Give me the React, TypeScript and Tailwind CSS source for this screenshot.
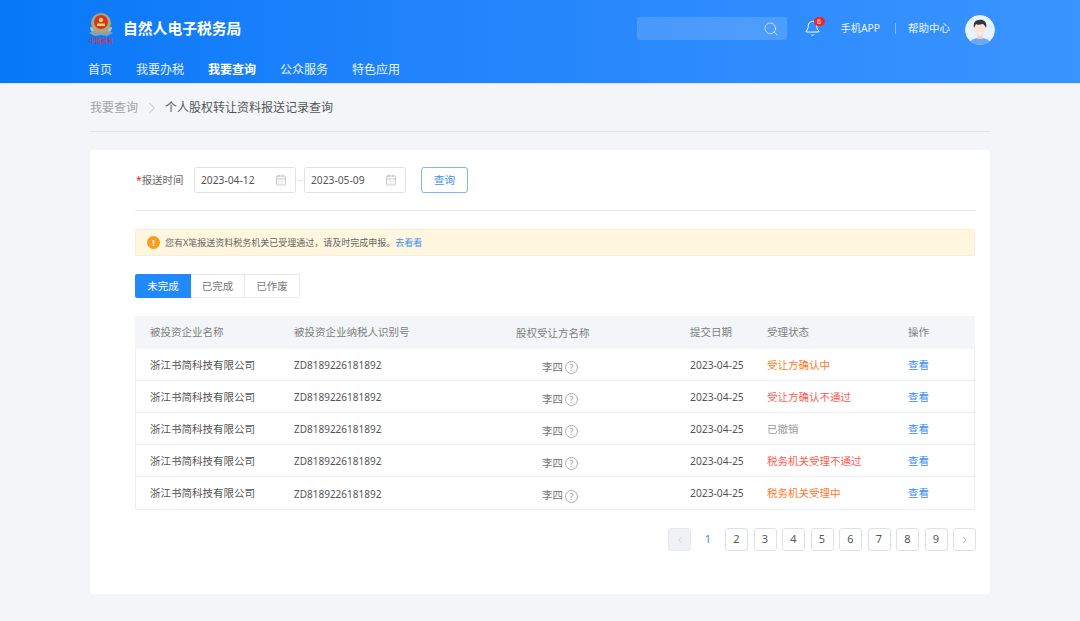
import { Search, Bell, CalendarDays, ChevronRight, ChevronLeft } from "lucide-react";

const rows = [
  { s: "受让方确认中", c: "text-[#ff7a1f]" },
  { s: "受让方确认不通过", c: "text-[#ff5a50]" },
  { s: "已撤销", c: "text-[#9a9a9a]" },
  { s: "税务机关受理不通过", c: "text-[#ff5a50]" },
  { s: "税务机关受理中", c: "text-[#ff7a1f]" },
];
const cols = "grid grid-cols-[144px_222px_174px_77px_141px_1fr] pl-[15px]";

function Emblem() {
  return (
    <div className="flex w-[26px] flex-col items-center">
      <svg width="24" height="25" viewBox="0 0 24 25">
        <path d="M1 15c0 5 5 8 11 8s11-3 11-8l-3 .5c-1 3.500-4 5-8 5s-7-1.500-8-5z" fill="#b9c3c9" />
        <path d="M0 21l6-3 6 3 6-3 6 3-6 3-6-1-6 1z" fill="#8fa0aa" />
        <circle cx="12" cy="11" r="10" fill="#a9a678" />
        <circle cx="12" cy="10" r="7" fill="#d9322a" />
        <circle cx="12" cy="8" r="2.200" fill="#f3d25a" />
        <rect x="8" y="11.500" width="8" height="2.500" fill="#f3d25a" />
      </svg>
      <span className="mt-[1px] whitespace-nowrap text-[6px] leading-[7px] text-[#e0262b]">中国税务</span>
    </div>
  );
}

function Avatar() {
  return (
    <svg width="30" height="30" viewBox="0 0 30 30" className="rounded-full">
      <circle cx="15" cy="15" r="15" fill="#e6f2ff" />
      <path d="M4 30c1-6 6-7 11-7s10 1 11 7z" fill="#6ea8f5" />
      <rect x="12.500" y="18" width="5" height="6" fill="#f3d2c4" />
      <ellipse cx="15" cy="14" rx="5.600" ry="7" fill="#fbe3d8" />
      <path d="M9 13c-1-5 1-8 5-8 3-1 7 1 7 4 1 1 0 3 0 4-1-2-2-4-4-4-2 1-5 1-6 0-1 1-1 3-2 4z" fill="#33363d" />
      <path d="M13 17.500h4c-.5 1.400-3.500 1.400-4 0z" fill="#fff" />
    </svg>
  );
}

function DateBox({ v }: { v: string }) {
  return (
    <div className="flex h-[26px] w-[102px] items-center justify-between rounded-[3px] border border-[#dfe1e6] bg-white pl-[6px] pr-[7px]">
      <span className="pt-[2px] text-[10.250px] text-[#555]">{v}</span>
      <CalendarDays size={12} strokeWidth={1.2} className="-translate-x-px text-[#a8a8a8]" />
    </div>
  );
}

export default function App() {
  return (
    <div className="h-[621px] w-[1080px] overflow-hidden bg-[#f4f5f9] font-['Noto_Sans','Noto_Sans_CJK_SC',sans-serif]">
      <header className="h-[84px] border-b border-[#d6e6fb] bg-gradient-to-r from-[#0578f8] to-[#3a94ff] pl-[88px] pr-[85px]">
        <div className="flex h-[60px] items-center justify-between">
          <div className="mb-[4px] flex items-center gap-[9px]">
            <Emblem />
            <span className="text-[14.800px] font-bold text-white">自然人电子税务局</span>
          </div>
          <div className="flex items-center">
            <div className="mb-[3px] flex items-center">
              <div className="flex h-[23px] w-[150px] items-center justify-end rounded-[2px] bg-white/15 pr-[8px]">
                <Search size={16} strokeWidth={1.2} className="text-white/80" />
              </div>
              <div className="relative ml-[17px] mr-[20px]">
                <Bell size={17} strokeWidth={1.4} className="text-white" />
                <span className="absolute -right-[4px] -top-[3px] flex h-[9px] w-[11px] items-center justify-center rounded-full bg-[#f5222d] text-[7px] leading-none text-white">6</span>
              </div>
              <span className="text-[10.250px] text-white/90">手机APP</span>
              <span className="ml-[15px] mr-[12px] h-[11px] w-px bg-white/40" />
              <span className="mr-[15px] text-[10.500px] text-white/90">帮助中心</span>
            </div>
            <Avatar />
          </div>
        </div>
        <nav className="flex h-[19px] items-center gap-[24px] text-[12px] text-white/90">
          <span>首页</span>
          <span>我要办税</span>
          <span className="font-bold text-white">我要查询</span>
          <span>公众服务</span>
          <span>特色应用</span>
        </nav>
      </header>

      <div className="px-[90px]">
        <div className="flex h-[48px] items-center border-b border-[#e1e3e8] pt-px text-[12px]">
          <span className="text-[#a3a3a3]">我要查询</span>
          <ChevronRight size={18} strokeWidth={1} className="ml-[5px] mr-[4px] text-[#a3a3a3]" />
          <span className="text-[#555]">个人股权转让资料报送记录查询</span>
        </div>

        <main className="mt-[18px] h-[444px] bg-white pl-[45px] pr-[15px] pt-[17px]">
          <div className="flex h-[44px] items-start border-b border-[#e6e7eb]">
            <div className="flex items-center">
              <span className="mr-[12px] w-[47px] whitespace-nowrap text-left pl-px text-[10.400px] leading-[26px] text-[#666]"><span className="text-[#f5222d]">*</span>报送时间</span>
              <DateBox v="2023-04-12" />
              <span className="mx-[1.500px] h-px w-[5px] bg-[#dfe1e6]" />
              <DateBox v="2023-05-09" />
              <button className="ml-[15px] h-[26px] w-[47px] rounded-[3px] border border-[#7db6fb] bg-white pt-[2px] text-[10.500px] text-[#3b8ff5]">查询</button>
            </div>
          </div>

          <div className="mt-[18px] flex h-[27px] items-center rounded-[2px] border border-[#fbeed0] bg-[#fff6e0] pl-[11px]">
            <span className="mr-[5px] flex h-[13px] w-[13px] items-center justify-center rounded-full bg-[#fa9d1c] text-[9px] font-bold leading-none text-white">!</span>
            <span className="text-[9px] text-[#666]">您有X笔报送资料税务机关已受理通过，请及时完成申报。<span className="text-[#3b8ff5]">去看看</span></span>
          </div>

          <div className="mt-[18px] flex h-[24px] w-[165px] text-[10.500px] text-[#777]">
            <span className="flex w-[56px] items-center justify-center rounded-l-[2px] bg-[#2089fb] pt-px text-white">未完成</span>
            <span className="flex w-[54px] items-center justify-center border-y border-r border-[#e8e9ed] pt-px">已完成</span>
            <span className="flex w-[55px] items-center justify-center rounded-r-[2px] border-y border-r border-[#e8e9ed] pt-px">已作废</span>
          </div>

          <div className="mt-[18px] border border-t-0 border-[#eceef1]">
            <div className={`${cols} -mx-px h-[33px] items-center bg-[#f3f5f8] pt-px text-[10.500px] text-[#808080]`}>
              <span>被投资企业名称</span>
              <span>被投资企业纳税人识别号</span>
              <span className="translate-y-[1px]">股权受让方名称</span>
              <span>提交日期</span>
              <span>受理状态</span>
              <span>操作</span>
            </div>
            {rows.map((r, i) => (
              <div key={i} className={`${cols} -ml-px h-[32px] items-center pt-[2px] text-[10.500px] text-[#555] ${i < 4 ? "border-b border-[#eceef1]" : ""}`}>
                <span>浙江书简科技有限公司</span>
                <span className="text-[10px]">ZD8189226181892</span>
                <span className="flex translate-y-[2px] items-center gap-[2px] pl-[26px] text-[#777]">
                  李四
                  <span className="flex h-[13px] w-[13px] items-center justify-center rounded-full border border-[#aaa] text-[9px] leading-none text-[#999]">?</span>
                </span>
                <span className="text-[10.300px]">2023-04-25</span>
                <span className={r.c}>{r.s}</span>
                <span className="text-[#3b8ff5]">查看</span>
              </div>
            ))}
          </div>

          <div className="-mr-px mt-[18px] flex justify-end gap-[5.500px] text-[11px] text-[#555]">
            <span className="flex h-[23px] w-[23px] items-center justify-center rounded-[3px] border border-[#e6e8ee] bg-[#f0f2f6] text-[#c8c8c8]"><ChevronLeft size={10} /></span>
            <span className="flex h-[23px] w-[23px] items-center justify-center text-[#3b8ff5]">1</span>
            {[2, 3, 4, 5, 6, 7, 8, 9].map((n) => (
              <span key={n} className="flex h-[23px] w-[23px] items-center justify-center rounded-[3px] border border-[#dfe1e6]">{n}</span>
            ))}
            <span className="flex h-[23px] w-[23px] items-center justify-center rounded-[3px] border border-[#dfe1e6] text-[#999]"><ChevronRight size={10} /></span>
          </div>
        </main>
      </div>
    </div>
  );
}
